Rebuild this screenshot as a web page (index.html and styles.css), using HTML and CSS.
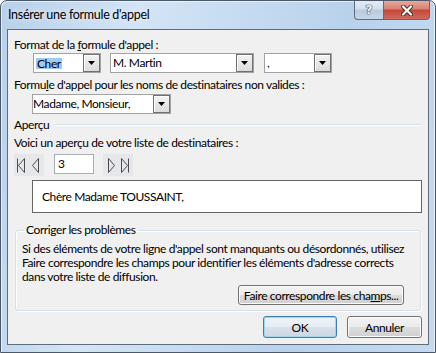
FILE: index.html
```html
<!DOCTYPE html>
<html lang="fr">
<head>
  <meta charset="UTF-8" />
  <title>Insérer une formule d'appel</title>
  <link rel="stylesheet" href="styles.css">
</head>
<body>
  <div class="window">
    <div class="titlebar">
      <span class="title">Insérer une formule d'appel</span>
      <div class="caption">
        <span class="cap-btn help">?</span>
        <span class="cap-btn close">
          <svg width="12" height="11" viewBox="0 0 12 11">
            <path d="M2 1.5 L10 9.5 M10 1.5 L2 9.5" stroke="#4a2a26" stroke-width="4" stroke-linecap="round" />
            <path d="M2 1.5 L10 9.5 M10 1.5 L2 9.5" stroke="#fff" stroke-width="2.2" stroke-linecap="round" />
          </svg>
        </span>
      </div>
    </div>

    <div class="client">
      <div class="label">Format de la <u>f</u>ormule d'appel :</div>
      <div class="combo-row row-format">
        <div class="combo combo-cher"><span class="combo-text"><span class="sel">Cher</span></span><span class="drop"><svg width="7" height="4" viewBox="0 0 7 4"><polygon points="0,0 7,0 3.5,4" fill="#000"/></svg></span></div>
        <div class="combo combo-name"><span class="combo-text">M. Martin</span><span class="drop"><svg width="7" height="4" viewBox="0 0 7 4"><polygon points="0,0 7,0 3.5,4" fill="#000"/></svg></span></div>
        <div class="combo combo-punct"><span class="combo-text">,</span><span class="drop"><svg width="7" height="4" viewBox="0 0 7 4"><polygon points="0,0 7,0 3.5,4" fill="#000"/></svg></span></div>
      </div>

      <div class="label label-invalid">Formu<u>l</u>e d'appel pour les noms de destinataires non valides :</div>
      <div class="combo-row row-invalid">
        <div class="combo combo-invalid"><span class="combo-text list">Madame, Monsieur,</span><span class="drop"><svg width="7" height="4" viewBox="0 0 7 4"><polygon points="0,0 7,0 3.5,4" fill="#000"/></svg></span></div>
      </div>

      <div class="section-head">
        <span>Aperçu</span>
        <span class="section-line"></span>
      </div>
      <div class="label label-voici">Voici un aperçu de votre liste de destinataires :</div>

      <div class="nav-row">
        <div class="nav-group">
          <svg width="30" height="22" viewBox="0 0 30 22">
            <path d="M3.5 4.5 V18.5 M10.5 4.5 L4.5 11.5 L10.5 18.5 Z" fill="none" stroke="#4b4b4b" />
            <path d="M24.5 4.5 L18.5 11.5 L24.5 18.5 Z" fill="none" stroke="#4b4b4b" />
          </svg>
        </div>
        <div class="record-box">3</div>
        <div class="nav-group">
          <svg width="30" height="22" viewBox="0 0 30 22">
            <path d="M5.5 4.5 L11.5 11.5 L5.5 18.5 Z" fill="none" stroke="#4b4b4b" />
            <path d="M18.5 4.5 L24.5 11.5 L18.5 18.5 Z M25.5 4.5 V18.5" fill="none" stroke="#4b4b4b" />
          </svg>
        </div>
      </div>

      <div class="preview">Chère Madame TOUSSAINT,</div>

      <fieldset class="group">
        <legend>Corriger les problèmes</legend>
        <p class="group-text">Si des éléments de votre ligne d'appel sont manquants ou désordonnés, utilisez<br>Faire correspondre les champs pour identifier les éléments d'adresse corrects<br>dans votre liste de diffusion.</p>
        <div class="group-actions">
          <button class="btn btn-match">Faire correspondre les cha<u>m</u>ps...</button>
        </div>
      </fieldset>

      <div class="dialog-actions">
        <button class="btn btn-default">OK</button>
        <button class="btn btn-cancel">Annuler</button>
      </div>
    </div>
  </div>
</body>
</html>
```

FILE: styles.css
```css
body {
  margin: 0;
  padding: 0;
  font-family: Lato, "Noto Sans", sans-serif;
  font-size: 12px;
  letter-spacing: -0.4px;
  color: #000;
  background: #fff;
}

.window {
  width: 436px;
  height: 353px;
  box-sizing: border-box;
  border: 1px solid #4a5869;
  border-radius: 7px 7px 0 0;
  padding: 0 6px 7px 6px;
  display: flex;
  flex-direction: column;
  background: linear-gradient(100deg, #b7d0ea 0%, #d3e4f6 28%, #c9ddf2 45%, #b9d2ec 70%, #c4daf1 100%);
  box-shadow: inset 1px 1px 0 rgba(255, 255, 255, 0.6), inset -1px 0 0 rgba(255, 255, 255, 0.6);
}

.titlebar {
  height: 28px;
  display: flex;
  justify-content: space-between;
  align-items: flex-start;
  margin-right: -1px;
}

.title {
  padding: 7px 0 0 1px;
  line-height: 14px;
  font-size: 12.5px;
  letter-spacing: -0.3px;
  text-shadow: 0 0 6px rgba(255, 255, 255, 0.9);
}

.caption {
  display: flex;
  height: 19px;
}

.cap-btn {
  box-sizing: border-box;
  height: 19px;
  display: flex;
  align-items: center;
  justify-content: center;
  border: 1px solid #5b6c80;
  border-top: none;
}

.help {
  width: 29px;
  border-radius: 0 0 0 4px;
  border-right: none;
  background: linear-gradient(#e3ebf4 0%, #d3dfec 45%, #b9cadc 50%, #c8d7e7 100%);
  color: #f4f6f9;
  font-family: "DejaVu Sans", sans-serif;
  font-weight: bold;
  font-size: 12px;
  letter-spacing: 0;
  text-shadow: 0 0 1px #2d3a48, 0 0 1px #2d3a48, 0 0 1px #2d3a48;
}

.close {
  width: 47px;
  border-radius: 0 0 4px 0;
  background: linear-gradient(#e9a99c 0%, #d88070 45%, #c4463a 50%, #d06a5c 100%);
}

.client {
  flex: 1;
  border: 1px solid #5e6b79;
  background: #f0f0f0;
  display: flex;
  flex-direction: column;
}

.label {
  line-height: 14px;
  padding-left: 6px;
  margin-top: 8px;
}

.label-invalid {
  margin-top: 5px;
}

.label-voici {
  margin-top: 4px;
}

.combo-row {
  display: flex;
  margin-top: 1px;
  padding-left: 25px;
}

.row-invalid {
  margin-top: 2px;
  padding-left: 24px;
}

.combo {
  box-sizing: border-box;
  height: 20px;
  border: 1px solid #a3a3a3;
  background: #fff;
  display: flex;
  align-items: stretch;
}

.combo-cher {
  width: 68px;
}

.combo-name {
  width: 144px;
  margin-left: 9px;
}

.combo-punct {
  width: 68px;
  margin-left: 10px;
}

.combo-invalid {
  width: 139px;
}

.combo-text {
  flex: 1;
  display: flex;
  align-items: center;
  padding-left: 2px;
  line-height: 14px;
}

.combo-text.list {
  padding-left: 0;
}

.sel {
  background: #9dcbf3;
  padding: 0 1px;
  line-height: 11px;
}

.drop {
  box-sizing: border-box;
  width: 17px;
  border: 1px solid #707070;
  background: linear-gradient(#f3f3f3, #dcdcdc);
  box-shadow: inset 1px 1px 0 #fff;
  display: flex;
  align-items: center;
  justify-content: center;
}

.section-head {
  display: flex;
  align-items: center;
  margin-top: 4px;
  padding: 0 6px;
  line-height: 14px;
}

.section-line {
  flex: 1;
  margin-left: 6px;
  border-top: 1px solid #d5dfe5;
  border-bottom: 1px solid #fff;
}

.nav-row {
  display: flex;
  align-items: flex-start;
  margin-top: 4px;
  padding-left: 6px;
}

.nav-group {
  width: 30px;
  height: 22px;
  background: #e6e7ea;
}

.nav-group svg {
  display: block;
}

.record-box {
  box-sizing: border-box;
  width: 40px;
  height: 20px;
  margin: 0 9px 0 10px;
  border: 1px solid #a9adb4;
  background: #fff;
  padding-left: 3px;
  line-height: 18px;
}

.preview {
  box-sizing: border-box;
  width: 390px;
  height: 33px;
  margin: 4px 0 0 24px;
  border: 1px solid #646464;
  background: #fff;
  padding-left: 9px;
  display: flex;
  align-items: center;
}

.group {
  margin: 10px 7px 0 7px;
  padding: 0 16px 5px 6px;
  border: 1px solid #d5dfe5;
  border-radius: 3px;
  box-shadow: inset 1px 1px 0 #fff, 1px 1px 0 #fff;
}

.group legend {
  padding: 0 2px;
  margin-left: 2px;
  line-height: 14px;
}

.group-text {
  margin: 5px 0 0 0;
  line-height: 14px;
  white-space: nowrap;
}

.group-actions {
  display: flex;
  justify-content: flex-end;
  margin-top: 1px;
}

.btn {
  box-sizing: border-box;
  font-family: inherit;
  font-size: 12px;
  letter-spacing: -0.4px;
  white-space: nowrap;
  color: #000;
  height: 20px;
  padding: 0;
  border: 1px solid #707070;
  border-radius: 3px;
  background: linear-gradient(#f2f2f2 0%, #ebebeb 50%, #dddddd 50%, #cfcfcf 100%);
  box-shadow: inset 0 0 0 1px #fcfcfc;
}

.btn-match {
  width: 166px;
}

.dialog-actions {
  display: flex;
  justify-content: flex-end;
  margin-top: 5px;
  padding-right: 6px;
}

.btn-default,
.btn-cancel {
  height: 22px;
}

.btn-default {
  width: 74px;
  border-color: #3c7fb1;
  box-shadow: inset 0 0 0 1px #9fd5f3;
  background: linear-gradient(#eef3f7 0%, #e6edf3 50%, #d7e1ea 50%, #cbd7e2 100%);
}

.btn-cancel {
  width: 75px;
  margin-left: 10px;
}
```
